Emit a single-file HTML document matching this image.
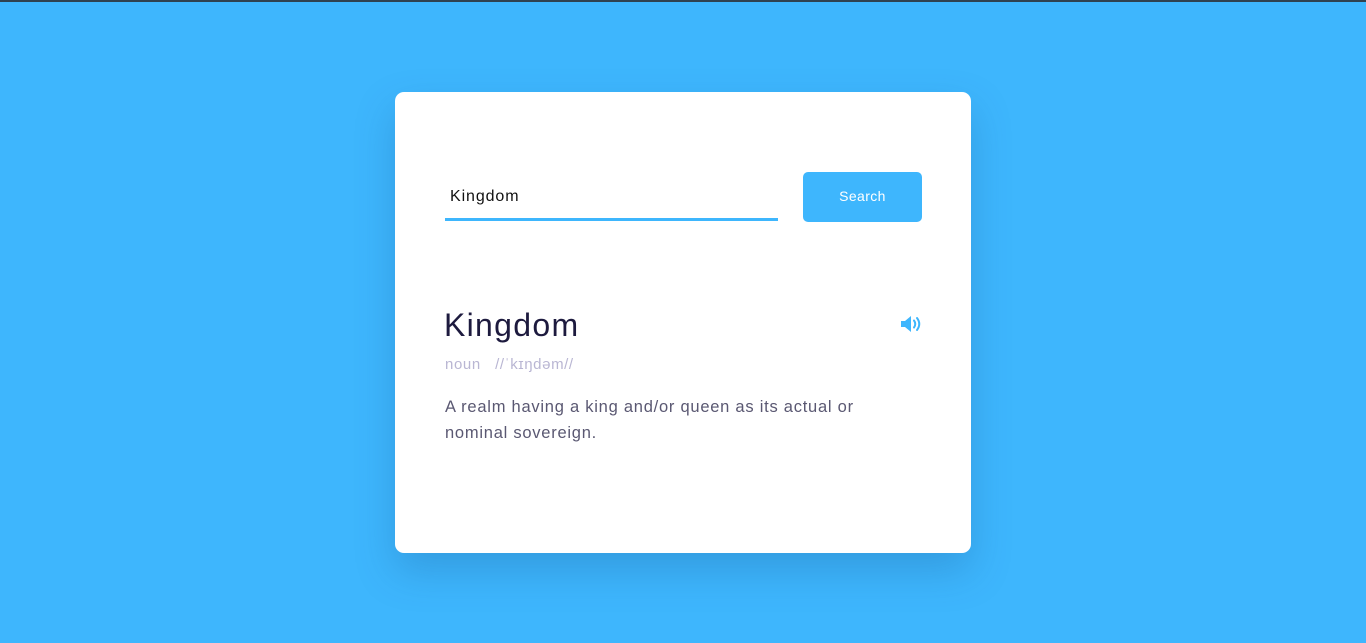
<!DOCTYPE html>
<html><head><meta charset="utf-8"><style>
*{margin:0;padding:0;box-sizing:border-box}
html,body{width:1366px;height:643px;overflow:hidden}
body{background:#3eb6fd;font-family:"Liberation Sans",sans-serif;position:relative}
.top{position:absolute;left:0;top:0;width:1366px;height:2px;background:#2f4250}
.card{position:absolute;left:395px;top:92px;width:576px;height:461px;background:#fff;border-radius:9px;box-shadow:0 18px 40px rgba(20,80,140,0.25)}
.inp{position:absolute;left:50px;top:80px;width:333px;height:49px;border-bottom:3px solid #3eb6fd;font-size:16px;letter-spacing:0.9px;color:#111;padding:16px 0 0 5px}
.btn{position:absolute;left:408px;top:80px;width:119px;height:50px;background:#3eb6fd;border-radius:5px;color:#fff;font-size:14px;letter-spacing:0.4px;text-align:center;line-height:48px}
h1{position:absolute;left:49px;top:215px;font-size:32px;font-weight:normal;color:#1d1a3e;letter-spacing:1.3px}
.ph{position:absolute;left:50px;top:264px;font-size:15px;letter-spacing:0.6px;color:#b9b6d3}
.def{position:absolute;left:50px;top:302px;width:440px;font-size:16.5px;letter-spacing:0.75px;line-height:26px;color:#5a5872}
svg{position:absolute;left:505px;top:222px}
</style></head><body>
<div class="top"></div>
<div class="card">
<div class="inp">Kingdom</div>
<div class="btn">Search</div>
<h1>Kingdom</h1>
<svg width="24" height="20" viewBox="0 0 24 20"><path d="M1 7h4l6-5v16l-6-5H1z" fill="#3eb6fd"/><path d="M14 6.5q2.5 3.5 0 7M17 4q4.5 6 0 12" stroke="#3eb6fd" stroke-width="2" fill="none" stroke-linecap="round"/></svg>
<div class="ph">noun &nbsp; //ˈkɪŋdəm//</div>
<div class="def">A realm having a king and/or queen as its actual or nominal sovereign.</div>
</div>
</body></html>
